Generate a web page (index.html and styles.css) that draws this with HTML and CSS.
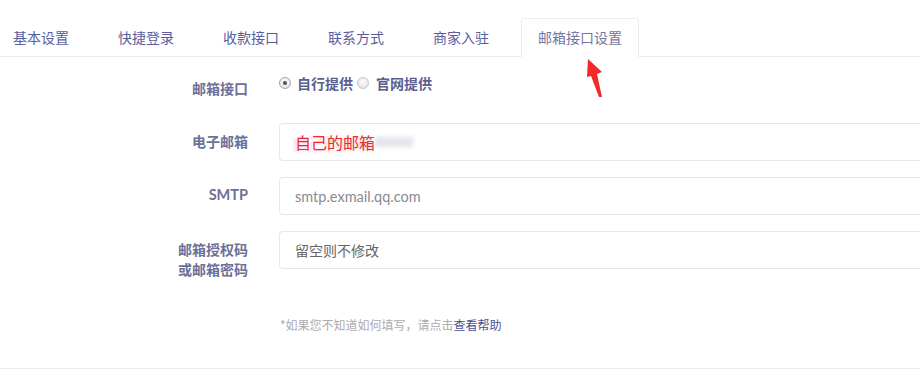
FILE: index.html
```html
<!DOCTYPE html>
<html lang="zh-CN">
<head>
<meta charset="utf-8">
<title>邮箱接口设置</title>
<link rel="stylesheet" href="styles.css">
</head>
<body>
<div class="page">
  <ul class="tabs">
    <li class="tab">基本设置</li>
    <li class="tab">快捷登录</li>
    <li class="tab">收款接口</li>
    <li class="tab">联系方式</li>
    <li class="tab">商家入驻</li>
    <li class="tab active">邮箱接口设置</li>
  </ul>
  <svg class="arrow" width="24" height="44" viewBox="0 0 24 44">
    <polygon points="3,1 17,14 12,16 17,39 14,39 6,18 2,19" fill="#f22a2a"/>
  </svg>
  <div class="form">
    <div class="row row-radio">
      <div class="label">邮箱接口</div>
      <div class="radios">
        <span class="radio checked"></span><span class="radio-text">自行提供</span>
        <span class="radio second"></span><span class="radio-text">官网提供</span>
      </div>
    </div>
    <div class="row">
      <div class="label">电子邮箱</div>
      <div class="field"><span class="value-red">自己的邮箱</span><span class="blur"></span></div>
    </div>
    <div class="row">
      <div class="label label-latin">SMTP</div>
      <div class="field"><span class="placeholder">smtp.exmail.qq.com</span></div>
    </div>
    <div class="row">
      <div class="label">邮箱授权码<br>或邮箱密码</div>
      <div class="field"><span class="placeholder-cn">留空则不修改</span></div>
    </div>
    <div class="row row-hint">
      <div class="label"></div>
      <div class="hint">*如果您不知道如何填写，请点击<a class="help">查看帮助</a></div>
    </div>
  </div>
</div>
</body>
</html>
```

FILE: styles.css
```css
* { box-sizing: border-box; }
html, body {
  margin: 0;
  padding: 0;
  background: #fff;
  overflow: hidden;
}
body {
  width: 920px;
  height: 390px;
  font-family: "Lato", "Noto Sans CJK SC", sans-serif;
}
.page {
  position: relative;
}
.tabs {
  list-style: none;
  margin: 0;
  padding: 18px 0 0 0;
  display: flex;
  height: 57px;
  border-bottom: 1px solid #ececf3;
}
.tab {
  font-family: "Noto Sans CJK SC", sans-serif;
  font-size: 14px;
  color: #5a5d9e;
  height: 38px;
  line-height: 37px;
  padding: 0 16px;
  margin-right: 15px;
  border: 1px solid transparent;
  border-bottom: none;
}
.tab:first-child {
  margin-left: -4px;
}
.tab.active {
  color: #74779f;
  background: #fff;
  border-color: #ececf3;
  border-radius: 3px 3px 0 0;
  height: 39px;
  margin-bottom: -1px;
}
.arrow {
  position: absolute;
  left: 585px;
  top: 58px;
}
.form {
  padding-top: 16px;
  padding-bottom: 35px;
  border-bottom: 1px solid #ececf3;
}
.row {
  display: flex;
  align-items: flex-start;
  margin-top: 16px;
}
.row-radio {
  margin-top: 0;
  height: 34px;
}
.label {
  width: 248px;
  flex: none;
  text-align: right;
  font-family: "Noto Sans CJK SC", sans-serif;
  font-weight: bold;
  font-size: 14px;
  line-height: 20px;
  padding-top: 8px;
  color: #6d7197;
  margin-right: 31px;
}
.label-latin {
  font-family: "Lato", "Noto Sans CJK SC", sans-serif;
  font-size: 14.5px;
}
.row-radio .label {
  padding-top: 5px;
}
.radios {
  display: flex;
  align-items: center;
  height: 20px;
}
.radio {
  flex: none;
  width: 12px;
  height: 12px;
  border-radius: 50%;
  border: 1px solid #c4c4cc;
  background: radial-gradient(circle at 50% 40%, #fdfdfd, #dcdce2);
  position: relative;
  margin-right: 6px;
}
.radio.second {
  margin-left: 4px;
  margin-right: 7px;
}
.radio.checked {
  border-color: #a4a4ac;
}
.radio.checked::after {
  content: "";
  position: absolute;
  left: 3px;
  top: 3px;
  width: 4px;
  height: 4px;
  border-radius: 50%;
  background: #505058;
}
.radio-text {
  font-family: "Noto Sans CJK SC", sans-serif;
  font-weight: bold;
  font-size: 14px;
  color: #5b608f;
}
.field {
  flex: 1;
  min-width: 0;
  height: 38px;
  border: 1px solid #e7e7ee;
  border-right: none;
  border-radius: 4px 0 0 4px;
  background: #fff;
  padding-left: 15px;
  display: flex;
  align-items: center;
}
.value-red {
  font-family: "Noto Sans CJK SC", sans-serif;
  font-size: 16px;
  color: #ea2a2e;
  text-shadow: -3px 1px 3px rgba(240, 150, 160, 0.5);
}
.blur {
  width: 38px;
  height: 10px;
  background: #e4e4ec;
  filter: blur(2px);
}
.placeholder {
  font-family: "Lato", sans-serif;
  font-size: 14.5px;
  color: #8a8a92;
}
.placeholder-cn {
  font-family: "Noto Sans CJK SC", sans-serif;
  font-size: 14px;
  color: #666;
}
.row-hint {
  margin-top: 38px;
}
.row-hint .label {
  padding-top: 0;
  margin-right: 32px;
}
.hint {
  font-family: "Noto Sans CJK SC", sans-serif;
  font-size: 12px;
  line-height: 16px;
  color: #ababb0;
}
.help {
  color: #4a4f94;
  text-decoration: none;
}
```
